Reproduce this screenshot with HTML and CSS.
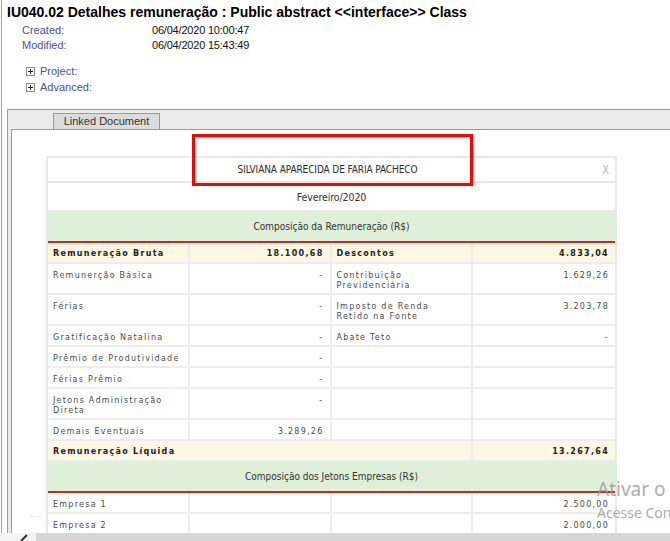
FILE: index.html
```html
<!DOCTYPE html>
<html lang="pt-BR">
<head>
<meta charset="utf-8">
<title>IU040.02 Detalhes remuneração</title>
<link rel="stylesheet" href="styles.css">
</head>
<body>
<div class="screen">
  <div class="frame">
    <header class="doc-head">
      <h1 class="doc-title">IU040.02 Detalhes remuneração : Public abstract &lt;&lt;interface&gt;&gt; Class</h1>
      <dl class="meta">
        <div class="meta-row"><dt>Created:</dt><dd>06/04/2020 10:00:47</dd></div>
        <div class="meta-row"><dt>Modified:</dt><dd>06/04/2020 15:43:49</dd></div>
      </dl>
      <ul class="expanders">
        <li><svg class="plus" width="9" height="9" viewBox="0 0 9 9"><rect x="0.5" y="0.5" width="8" height="8" fill="#fff" stroke="#8a8a8a"/><path d="M2 4.5h5M4.5 2v5" stroke="#222"/></svg>Project:</li>
        <li><svg class="plus" width="9" height="9" viewBox="0 0 9 9"><rect x="0.5" y="0.5" width="8" height="8" fill="#fff" stroke="#8a8a8a"/><path d="M2 4.5h5M4.5 2v5" stroke="#222"/></svg>Advanced:</li>
      </ul>
    </header>
    <section class="panel">
      <div class="tabs"><span class="tab">Linked Document</span></div>
      <div class="viewer">
        <div class="card">
          <div class="card-head"><span class="name">SILVIANA APARECIDA DE FARIA PACHECO</span><span class="close">X</span></div>
          <div class="card-month">Fevereiro/2020</div>
          <table class="pay">
            <colgroup><col><col><col><col></colgroup>
            <tr><td class="section" colspan="4">Composição da Remuneração (R$)</td></tr>
            <tr class="total"><td>Remuneração Bruta</td><td class="num">18.100,68</td><td>Descontos</td><td class="num">4.833,04</td></tr>
            <tr><td>Remunerção Básica</td><td class="num">-</td><td>Contribuição Previdenciária</td><td class="num">1.629,26</td></tr>
            <tr><td>Férias</td><td class="num">-</td><td>Imposto de Renda<br>Retido na Fonte</td><td class="num">3.203,78</td></tr>
            <tr><td>Gratificação Natalina</td><td class="num">-</td><td>Abate Teto</td><td class="num">-</td></tr>
            <tr><td>Prêmio de Produtividade</td><td class="num">-</td><td></td><td></td></tr>
            <tr><td>Férias Prêmio</td><td class="num">-</td><td></td><td></td></tr>
            <tr><td>Jetons Administração Direta</td><td class="num">-</td><td></td><td></td></tr>
            <tr><td>Demais Eventuais</td><td class="num">3.289,26</td><td></td><td></td></tr>
            <tr class="total"><td colspan="3">Remuneração Líquida</td><td class="num">13.267,64</td></tr>
            <tr><td class="section" colspan="4">Composição dos Jetons Empresas (R$)</td></tr>
            <tr><td>Empresa 1</td><td></td><td></td><td class="num">2.500,00</td></tr>
            <tr><td>Empresa 2</td><td></td><td></td><td class="num">2.000,00</td></tr>
          </table>
        </div>
        <span class="annot"></span>
        <span class="dots">....</span>
      </div>
    </section>
  </div>
  <div class="hbar">
    <span class="hbar-grip"><svg width="8" height="8" viewBox="0 0 8 8"><path d="M1 8L7 2" stroke="#333" stroke-width="2"/></svg></span>
    <span class="hbar-track"></span>
  </div>
  <div class="watermark">
    <div class="wm-1">Ativar o Windows</div>
    <div class="wm-2">Acesse Configurações para ativar o Windows.</div>
  </div>
</div>
</body>
</html>
```

FILE: styles.css
```css
* { box-sizing: border-box; }
html, body { margin: 0; padding: 0; background: #fff; }
body { font-family: "Liberation Sans", Arial, sans-serif; color: #000; }

.screen {
  position: relative;
  width: 670px;
  height: 541px;
  overflow: hidden;
  display: flex;
  flex-direction: column;
}
.frame {
  flex: 1;
  min-height: 0;
  margin-left: 1px;
  border-left: 1px solid #a0a0a0;
  display: flex;
  flex-direction: column;
  overflow: hidden;
}

/* header */
.doc-head { padding-left: 5px; }
.doc-title {
  margin: 0;
  padding-top: 2px;
  font-size: 14px;
  line-height: 20px;
  font-weight: bold;
  white-space: nowrap;
}
.meta { margin: 0; padding-left: 15px; font-size: 11px; line-height: 15px; padding-top: 1px; }
.meta-row { display: flex; }
.meta dt { width: 130px; color: #50508f; }
.meta dd { margin: 0; color: #111; letter-spacing: -0.2px; }

.expanders {
  list-style: none;
  margin: 10px 0 0;
  padding: 0 0 0 19px;
  font-size: 11px;
  line-height: 16px;
  color: #50508f;
}
.expanders li { display: flex; align-items: center; gap: 5px; }
.plus { display: block; }

/* panel */
.panel {
  flex: 1;
  min-height: 0;
  margin: 14px 0 0 5px;
  border-top: 1px solid #9a9a9a;
  border-left: 1px solid #9a9a9a;
  background: #ececec;
  display: flex;
  flex-direction: column;
  padding-top: 3px;
}
.tabs { padding-left: 45px; height: 16px; }
.tab {
  display: block;
  width: 107px;
  height: 16px;
  border: 1px solid #9a9a9a;
  border-bottom: none;
  background: #dcdcdc;
  font-size: 11px;
  line-height: 15px;
  text-align: center;
  color: #333;
}
.viewer {
  position: relative;
  flex: 1;
  min-height: 0;
  margin-left: 3px;
  border-top: 1px solid #9a9a9a;
  border-left: 1px solid #9a9a9a;
  background: #fff;
  overflow: hidden;
  padding: 26px 0 0 34px;
}

/* card */
.card {
  width: 571px;
  border: 2px solid #e8e8e8;
  border-bottom: none;
  background: #fff;
  font-family: "DejaVu Sans Condensed", "Liberation Sans Narrow", "Liberation Sans", sans-serif;
  font-stretch: condensed;
  color: #333;
}
.card-head {
  height: 25px;
  border-bottom: 2px solid #e8e8e8;
  display: grid;
  grid-template-columns: 1fr auto 1fr;
  align-items: center;
  font-size: 10px;
}
.name { grid-column: 2; letter-spacing: -0.1px; padding-right: 8px; color: #2a2a2a; }
.close { grid-column: 3; justify-self: end; padding-right: 6px; color: #b5b5b5; font-size: 13px; transform: scaleX(0.8); }
.card-month {
  height: 29px;
  border-bottom: 2px solid #e8e8e8;
  text-align: center;
  line-height: 28px;
  font-size: 10.5px;
  letter-spacing: -0.1px;
}

.pay {
  width: 100%;
  table-layout: fixed;
  border-spacing: 0;
  border-collapse: separate;
}
.pay col { width: 25%; }
.pay td {
  padding: 7px 5px 2px 5px;
  line-height: 10px;
  height: 21px;
  vertical-align: top;
  border-bottom: 2px solid #ececec;
  border-right: 2px solid #ececec;
  font-family: "DejaVu Sans", Verdana, sans-serif;
  font-stretch: normal;
  font-size: 8px;
  letter-spacing: 1.25px;
  color: #4a4a4a;
}
.pay td:last-child { border-right: none; }
.pay td.num { text-align: right; padding-right: 6px; }
.pay tr.total td { background: #fcf8e3; font-weight: bold; color: #222; letter-spacing: 1.3px; padding-top: 6px; padding-bottom: 3px; }
.pay td.section {
  height: 30px;
  padding: 0;
  background: #dff0d8;
  border-right: none;
  border-bottom: 2px solid #c62a24;
  text-align: center;
  vertical-align: middle;
  line-height: 29px;
  font-family: "DejaVu Sans Condensed", "Liberation Sans Narrow", "Liberation Sans", sans-serif;
  font-stretch: condensed;
  font-size: 10px;
  letter-spacing: 0;
  color: #333;
}

/* overlays */
.annot {
  position: absolute;
  left: 180px;
  top: 4px;
  width: 281px;
  height: 52px;
  border: 3px solid #f00;
}
.dots {
  position: absolute;
  left: 18px;
  top: 381px;
  font-size: 7px;
  line-height: 8px;
  letter-spacing: 1px;
  color: #aaa;
}

/* bottom bar */
.hbar { height: 8px; display: flex; flex: none; }
.hbar-grip { width: 36px; background: #f3f3f3; padding-left: 20px; }
.hbar-grip svg { display: block; }
.hbar-track { flex: 1; background: #d6d6d6; }

.watermark {
  position: absolute;
  left: 597px;
  top: 475px;
  white-space: nowrap;
  font-family: "Noto Sans", "Open Sans", sans-serif;
  color: rgba(150, 150, 150, 0.8);
}
.wm-1 { font-size: 19px; line-height: 29px; }
.wm-2 { font-size: 14px; line-height: 18px; }
```
